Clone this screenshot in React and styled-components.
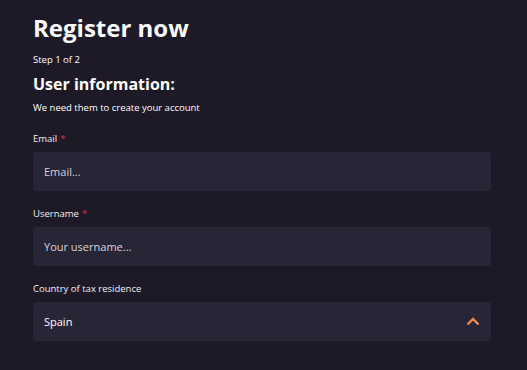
import React from "react";
import styled, { createGlobalStyle } from "styled-components";

const Global = createGlobalStyle`
  html, body { margin: 0; padding: 0; background: #1e1927; }
  body { font-family: "Open Sans", "Noto Sans", sans-serif; color: #ffffff; }
  * { box-sizing: border-box; }
`;

const Page = styled.div`
  width: 527px;
  height: 370px;
  padding: 12px 36px 0 33px;
  overflow: hidden;
`;

const Title = styled.h1`
  margin: 0;
  font-size: 24px;
  font-weight: 700;
  line-height: 32px;
`;

const Step = styled.div`
  font-size: 9.5px;
  line-height: 14px;
  margin-top: 9px;
`;

const Section = styled.h2`
  margin: 6px 0 0;
  font-size: 16px;
  font-weight: 700;
  line-height: 22px;
`;

const Sub = styled.p`
  margin: 6px 0 0;
  font-size: 9.5px;
  line-height: 14px;
`;

const Form = styled.div`
  display: flex;
  flex-direction: column;
  gap: 16px;
  margin-top: 17px;
`;

const Field = styled.div`
  display: flex;
  flex-direction: column;
  gap: 6px;
`;

const Label = styled.label`
  font-size: 9.5px;
  line-height: 14px;
  color: #f2f0f5;
`;

const Req = styled.span`
  color: #e2323f;
  margin-left: 3px;
`;

const Box = styled.div`
  height: 39px;
  background: #282636;
  border-radius: 3px;
  display: flex;
  align-items: center;
  justify-content: space-between;
  padding: 0 11px 0 11px;
  font-size: 11px;
  color: ${(p) => (p.$placeholder ? "#d6d4dc" : "#ffffff")};
`;

const Chevron = () => (
  <svg width="14" height="9" viewBox="0 0 14 9">
    <path d="M1.5 7.5 L7 2 L12.5 7.5" fill="none" stroke="#f0894a" strokeWidth="2.4" />
  </svg>
);

export default function App() {
  return (
    <Page>
      <Global />
      <Title>Register now</Title>
      <Step>Step 1 of 2</Step>
      <Section>User information:</Section>
      <Sub>We need them to create your account</Sub>
      <Form>
        <Field>
          <Label>Email<Req>*</Req></Label>
          <Box $placeholder>Email...</Box>
        </Field>
        <Field>
          <Label>Username<Req>*</Req></Label>
          <Box $placeholder>Your username...</Box>
        </Field>
        <Field>
          <Label>Country of tax residence</Label>
          <Box>
            Spain
            <Chevron />
          </Box>
        </Field>
      </Form>
    </Page>
  );
}
